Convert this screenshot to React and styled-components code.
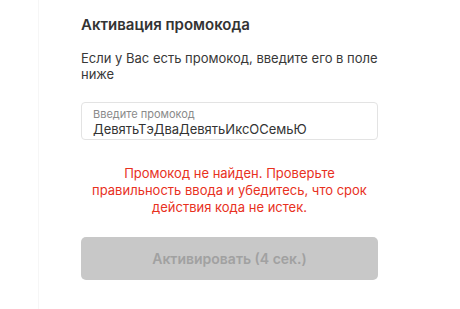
import React from "react";
import styled, { createGlobalStyle } from "styled-components";

const Global = createGlobalStyle`
  html, body { margin: 0; padding: 0; background: #fff; }
  body { font-family: Inter, "Noto Sans", sans-serif; color: #333; }
`;

const Page = styled.div`
  width: 460px;
  height: 309px;
  display: flex;
  background: #fff;
  overflow: hidden;
`;

const Side = styled.div`
  width: 38px;
  border-right: 1px solid #f6f6f6;
`;

const Panel = styled.div`
  width: 297px;
  margin-left: 42px;
  padding-top: 15px;
  display: flex;
  flex-direction: column;
`;

const Title = styled.h2`
  margin: 0;
  font-size: 15px;
  font-weight: 600;
  line-height: 20px;
  color: #333;
`;

const Hint = styled.p`
  margin: 15px 0 0;
  font-size: 13px;
  line-height: 16px;
  color: #383838;
`;

const Field = styled.div`
  margin-top: 20px;
  height: 38px;
  box-sizing: border-box;
  border: 1px solid #e3e3e3;
  border-radius: 4px;
  padding: 4px 11px 0;
  display: flex;
  flex-direction: column;
`;

const Label = styled.span`
  font-size: 11px;
  line-height: 14px;
  color: #8a8a8a;
`;

const Value = styled.span`
  font-size: 13px;
  line-height: 17px;
  color: #333;
`;

const Error = styled.p`
  margin: 25px 0 0;
  font-size: 13px;
  line-height: 17px;
  color: #e8311e;
  text-align: center;
  padding: 0 6px;
`;

const Button = styled.button`
  margin-top: 21px;
  height: 43px;
  border: none;
  border-radius: 5px;
  background: #c8c8c8;
  color: #a1a1a1;
  font-family: inherit;
  font-size: 14px;
  font-weight: 600;
  cursor: default;
`;

export default function App() {
  return (
    <>
      <Global />
      <Page>
        <Side />
        <Panel>
          <Title>Активация промокода</Title>
          <Hint>Если у Вас есть промокод, введите его в поле ниже</Hint>
          <Field>
            <Label>Введите промокод</Label>
            <Value>ДевятьТэДваДевятьИксОСемьЮ</Value>
          </Field>
          <Error>
            Промокод не найден. Проверьте правильность ввода и убедитесь, что срок действия кода не истек.
          </Error>
          <Button disabled>Активировать (4 сек.)</Button>
        </Panel>
      </Page>
    </>
  );
}
